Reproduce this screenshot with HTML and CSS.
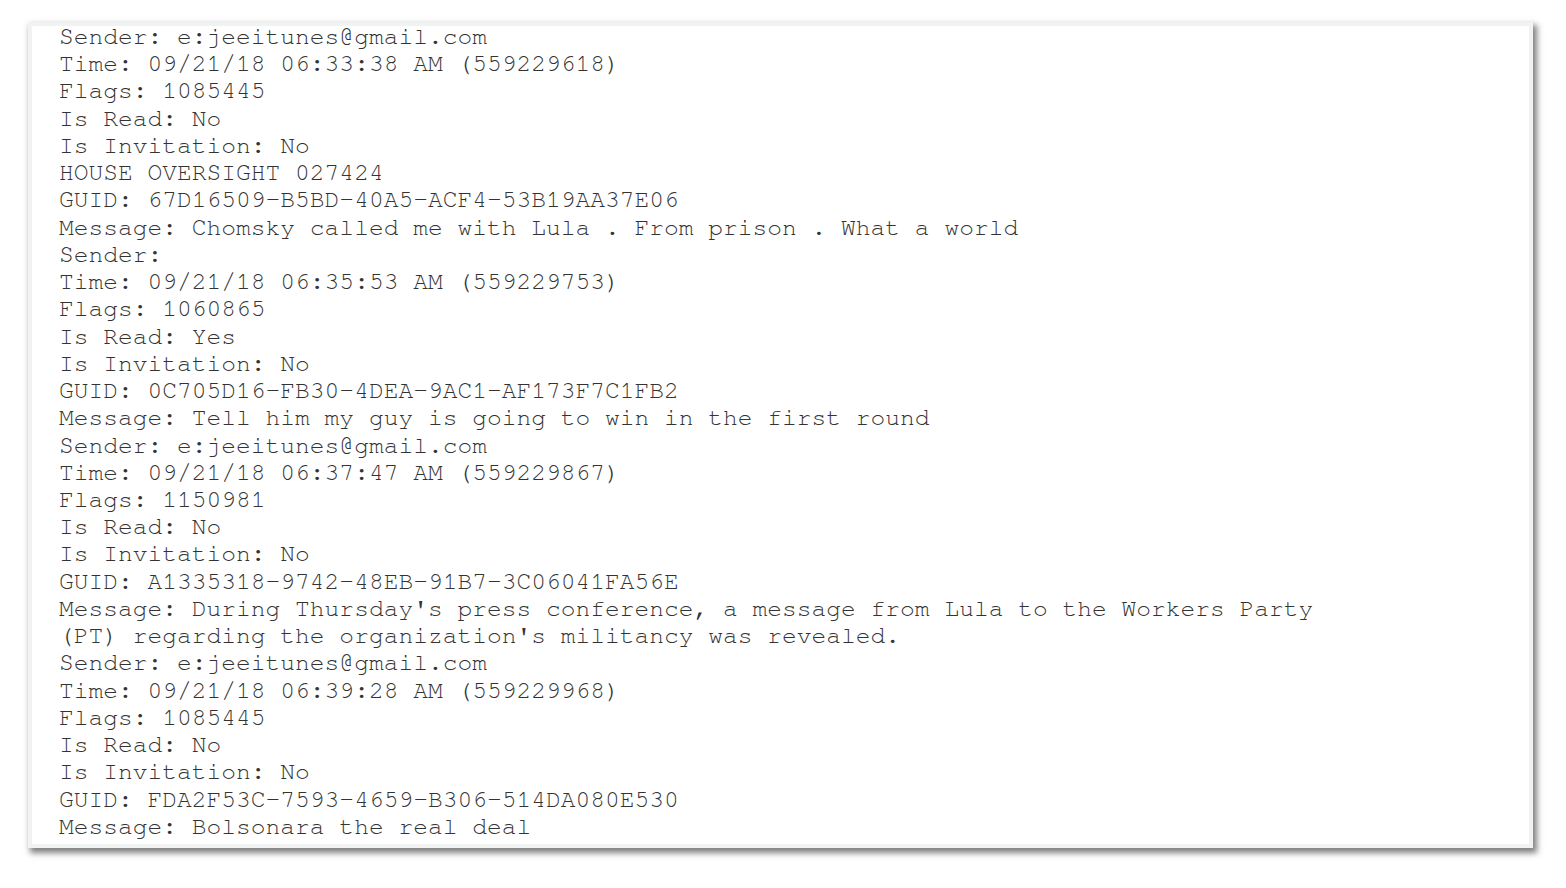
FILE: index.html
```html
<!DOCTYPE html>
<html>
<head>
<meta charset="utf-8">
<link rel="stylesheet" href="styles.css">
</head>
<body>
<div class="page">
<pre class="log">Sender: e:jeeitunes@gmail.com
Time: 09/21/18 06:33:38 AM (559229618)
Flags: 1085445
Is Read: No
Is Invitation: No
HOUSE OVERSIGHT 027424
GUID: 67D16509-B5BD-40A5-ACF4-53B19AA37E06
Message: Chomsky called me with Lula . From prison . What a world
Sender:
Time: 09/21/18 06:35:53 AM (559229753)
Flags: 1060865
Is Read: Yes
Is Invitation: No
GUID: 0C705D16-FB30-4DEA-9AC1-AF173F7C1FB2
Message: Tell him my guy is going to win in the first round
Sender: e:jeeitunes@gmail.com
Time: 09/21/18 06:37:47 AM (559229867)
Flags: 1150981
Is Read: No
Is Invitation: No
GUID: A1335318-9742-48EB-91B7-3C06041FA56E
Message: During Thursday's press conference, a message from Lula to the Workers Party
(PT) regarding the organization's militancy was revealed.
Sender: e:jeeitunes@gmail.com
Time: 09/21/18 06:39:28 AM (559229968)
Flags: 1085445
Is Read: No
Is Invitation: No
GUID: FDA2F53C-7593-4659-B306-514DA080E530
Message: Bolsonara the real deal</pre>
</div>
</body>
</html>
```

FILE: styles.css
```css
html, body {
  margin: 0;
  padding: 0;
  background: #ffffff;
}

body {
  box-sizing: border-box;
  min-height: 888px;
  padding: 22px 0 40px 28px;
}

.page {
  box-sizing: border-box;
  width: 1505px;
  height: 826px;
  background: #ffffff;
  border: 4px solid #f1f3f3;
  box-shadow: 3px 4px 6px 1px rgba(0, 0, 0, 0.5);
  padding: 0 0 0 27px;
  overflow: hidden;
}

.log {
  margin: -3px 0 0 0;
  font-family: "Nimbus Mono PS", "Nimbus Mono L", "FreeMono", "Courier 10 Pitch", "Courier New", "Liberation Mono", monospace;
  font-size: 24.6px;
  line-height: 27.24px;
  color: #333333;
  white-space: pre;
}
```
